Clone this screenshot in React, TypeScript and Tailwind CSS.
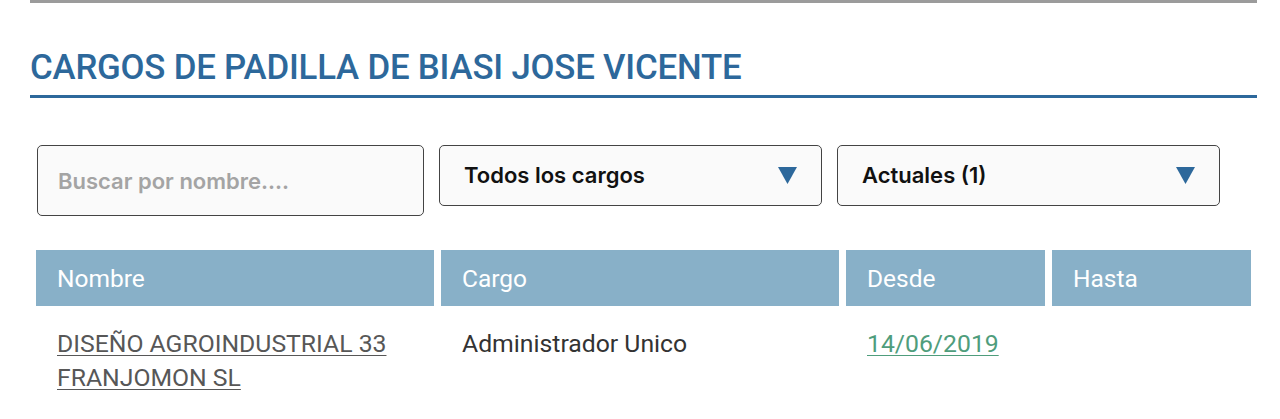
const columns = [
  { label: "Nombre" },
  { label: "Cargo" },
  { label: "Desde" },
  { label: "Hasta" },
];

const Caret = () => (
  <svg width="19" height="17" viewBox="0 0 19 17" className="shrink-0">
    <path d="M0 0 H19 L9.5 17 Z" fill="#2d689b" />
  </svg>
);

export default function App() {
  return (
    <div className="w-[1280px] h-[419px] bg-white overflow-hidden font-['Roboto',sans-serif]">
      <div className="ml-[30px] w-[1227px]">
        <div className="h-[3px] bg-[#9b9b9b]" />

        <h2 className="mt-[44px] text-[34.8px] leading-[40px] font-medium text-[#2d689b] tracking-[-0.2px]">
          CARGOS DE PADILLA DE BIASI JOSE VICENTE
        </h2>
        <div className="mt-[8px] h-[3px] bg-[#2d689b]" />

        <div className="mt-[47px] ml-[7px] flex items-start gap-[15px] font-['Inter',sans-serif]">
          <input
            placeholder="Buscar por nombre...."
            className="w-[387px] h-[71px] rounded-[5px] border-[1.5px] border-[#444] bg-[#fafafa] pl-[20px] text-[22px] font-semibold text-[#333] placeholder:text-[#a4a4a4] outline-none"
          />
          <div className="w-[383px] h-[61px] rounded-[5px] border-[1.5px] border-[#444] bg-[#fafafa] pl-[24px] pr-[24px] flex items-center justify-between">
            <span className="text-[22px] font-semibold text-[#111]">Todos los cargos</span>
            <Caret />
          </div>
          <div className="w-[383px] h-[61px] rounded-[5px] border-[1.5px] border-[#444] bg-[#fafafa] pl-[24px] pr-[24px] flex items-center justify-between">
            <span className="text-[22px] font-semibold text-[#111]">Actuales (1)</span>
            <Caret />
          </div>
        </div>

        <div className="mt-[34px] ml-[6px] w-[1215px]">
          <div className="grid grid-cols-[398px_398px_199px_199px] gap-x-[7px]">
            {columns.map((c) => (
              <div
                key={c.label}
                className="h-[56px] bg-[#88b0c8] pl-[21px] pt-[3px] flex items-center text-[24.5px] text-white"
              >
                {c.label}
              </div>
            ))}
          </div>
          <div className="grid grid-cols-[398px_398px_199px_199px] gap-x-[7px] pt-[21px] text-[24.75px] leading-[34px]">
            <div className="pl-[21px]">
              <a href="#" className="underline underline-offset-[3px] decoration-1 text-[#575757]">
                DISEÑO AGROINDUSTRIAL 33 FRANJOMON SL
              </a>
            </div>
            <div className="pl-[21px] text-[#333]">Administrador Unico</div>
            <div className="pl-[21px]">
              <a href="#" className="underline underline-offset-[3px] decoration-1 text-[#4f9d7c]">
                14/06/2019
              </a>
            </div>
            <div />
          </div>
        </div>
      </div>
    </div>
  );
}
